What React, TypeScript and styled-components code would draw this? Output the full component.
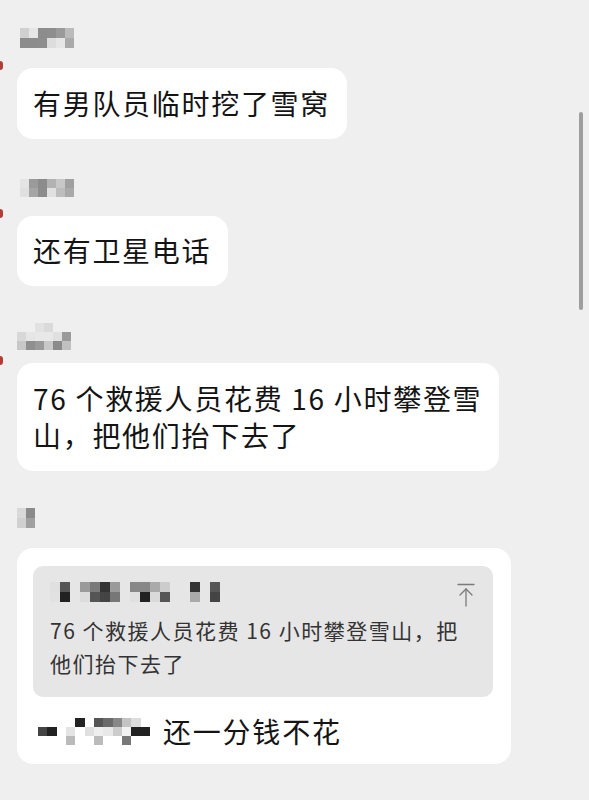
import styled, { createGlobalStyle } from "styled-components";

const GlobalStyle = createGlobalStyle`
  body {
    margin: 0;
    background: #efefef;
    font-family: "Noto Sans CJK SC", "Noto Sans", sans-serif;
    color: #141414;
  }
`;

const StyledFeed = styled.div`
  display: flex;
  flex-direction: column;
  gap: 37px;
  padding: 28px 0 40px 0;
`;

const StyledGroup = styled.div`
  display: flex;
  align-items: flex-start;
`;

const StyledMarker = styled.div<{ $on: boolean }>`
  flex-shrink: 0;
  width: 3px;
  height: 9px;
  margin: 33px 14px 0 0;
  border-radius: 0 5px 5px 0;
  background: ${(p) => (p.$on ? "#b43c36" : "transparent")};
`;

const StyledBody = styled.div`
  display: flex;
  flex-direction: column;
  align-items: flex-start;
`;

const StyledNameRow = styled.div<{ $offset: number }>`
  height: 40px;
  padding: ${(p) => p.$offset}px 0 0 3px;
  box-sizing: border-box;
`;

const StyledMosaic = styled.div<{ $cols: number; $w: number; $h: number }>`
  display: grid;
  grid-template-columns: repeat(${(p) => p.$cols}, ${(p) => p.$w}px);
  grid-auto-rows: ${(p) => p.$h}px;
  flex-shrink: 0;
`;

const StyledCell = styled.div<{ $c: string }>`
  background: ${(p) => p.$c || "transparent"};
`;

const StyledBubble = styled.div`
  background: #ffffff;
  border-radius: 16px;
  padding: 16.5px 17px 16.5px 16px;
  font-size: 28px;
  letter-spacing: 1.7px;
  line-height: 37.5px;
  white-space: nowrap;
`;

const StyledReplyBubble = styled.div`
  width: 494px;
  box-sizing: border-box;
  background: #ffffff;
  border-radius: 16px;
  padding: 18px 18px 14px 16px;
`;

const StyledQuote = styled.div`
  background: #e6e6e6;
  border-radius: 10px;
  padding: 16px 22px 17px 17px;
`;

const StyledQuoteHeader = styled.div`
  height: 20px;
  margin-bottom: 12px;
  display: flex;
  justify-content: space-between;
  align-items: flex-start;
`;

const StyledJumpIcon = styled.svg`
  width: 18px;
  height: 24px;
  margin: 1px -4px 0 0;
`;

const StyledQuoteText = styled.div`
  font-size: 21px;
  letter-spacing: 1.5px;
  line-height: 33px;
  color: #333333;
`;

const StyledReplyLine = styled.div`
  margin-top: 15px;
  padding-left: 5px;
  display: flex;
  align-items: center;
  gap: 13px;
  font-size: 28px;
  letter-spacing: 1.8px;
  line-height: 38px;
  white-space: nowrap;
`;

const StyledScrollbar = styled.div`
  position: fixed;
  top: 112px;
  right: 6px;
  width: 4px;
  height: 198px;
  border-radius: 2px;
  background: #9e9e9e;
`;

type MosaicProps = { rows: string[][]; w: number; h: number };

const Mosaic = ({ rows, w, h }: MosaicProps) => (
  <StyledMosaic $cols={rows[0].length} $w={w} $h={h}>
    {rows.flat().map((c, i) => (
      <StyledCell key={i} $c={c} />
    ))}
  </StyledMosaic>
);

const names: { rows: string[][]; w: number; h: number; offset: number }[] = [
  {
    w: 9,
    h: 10,
    offset: 0,
    rows: [
      ["#d0d0d0", "#e6e6e6", "#8c8c8c", "#8e8e8e", "#9a9a9a", "#bbbbbb"],
      ["#8c8c8c", "#8c8c8c", "#8e8e8e", "#dddddd", "#e6e6e6", "#aaaaaa"],
    ],
  },
  {
    w: 9,
    h: 9,
    offset: 3,
    rows: [
      ["#e4e4e4", "#9a9a9a", "#8c8c8c", "#b2b2b2", "#c8c8c8", "#a0a0a0"],
      ["#e0e0e0", "#a5a5a5", "#8c8c8c", "#e0e0e0", "#bdbdbd", "#a9a9a9"],
    ],
  },
  {
    w: 9,
    h: 9,
    offset: -3,
    rows: [
      ["", "", "#e2e2e2", "#dadada", "", ""],
      ["#d8d8d8", "#e6e6e6", "#e8e8e8", "#e8e8e8", "#e0e0e0", "#9a9a9a"],
      ["#c8c8c8", "#8f8f8f", "#9a9a9a", "#c8c8c8", "#8a8a8a", "#c0c0c0"],
    ],
  },
  {
    w: 9,
    h: 10,
    offset: -1,
    rows: [
      ["#d8d8d8", "#8a8a8a"],
      ["#d0d0d0", "#a0a0a0"],
    ],
  },
];

const quoteName = [
  ["#e0e0e0", "#555555", "", "#9a9a9a", "#7a7a7a", "#333333", "#9a9a9a", "", "#888888", "#888888", "#aaaaaa", "#cccccc", "", "", "#333333", "", "#555555"],
  ["#e2e2e2", "#222222", "", "#dcdcdc", "#555555", "#444444", "#777777", "", "#e0e0e0", "#222222", "#dadada", "#555555", "", "", "#aaaaaa", "", "#444444"],
];

const replyName = [
  ["", "", "", "", "#222222", "", "#555555", "#6a6a6a", "#888888", "#c4c4c4", "#dddddd", ""],
  ["#444444", "#222222", "", "#e4e4e4", "", "#e0e0e0", "#eeeeee", "#e8e8e8", "#cccccc", "#f2f2f2", "#222222", "#222222"],
  ["", "", "", "#bbbbbb", "", "", "#bbbbbb", "", "", "#777777", "", ""],
];

const App = () => {
  return (
    <>
      <GlobalStyle />
      <StyledFeed>
        <StyledGroup>
          <StyledMarker $on />
          <StyledBody>
            <StyledNameRow $offset={names[0].offset}>
              <Mosaic rows={names[0].rows} w={names[0].w} h={names[0].h} />
            </StyledNameRow>
            <StyledBubble>有男队员临时挖了雪窝</StyledBubble>
          </StyledBody>
        </StyledGroup>

        <StyledGroup>
          <StyledMarker $on />
          <StyledBody>
            <StyledNameRow $offset={names[1].offset}>
              <Mosaic rows={names[1].rows} w={names[1].w} h={names[1].h} />
            </StyledNameRow>
            <StyledBubble>还有卫星电话</StyledBubble>
          </StyledBody>
        </StyledGroup>

        <StyledGroup>
          <StyledMarker $on />
          <StyledBody>
            <StyledNameRow $offset={names[2].offset}>
              <Mosaic rows={names[2].rows} w={names[2].w} h={names[2].h} />
            </StyledNameRow>
            <StyledBubble>
              76 个救援人员花费 16 小时攀登雪
              <br />
              山，把他们抬下去了
            </StyledBubble>
          </StyledBody>
        </StyledGroup>

        <StyledGroup>
          <StyledMarker $on={false} />
          <StyledBody>
            <StyledNameRow $offset={names[3].offset}>
              <Mosaic rows={names[3].rows} w={names[3].w} h={names[3].h} />
            </StyledNameRow>
            <StyledReplyBubble>
              <StyledQuote>
                <StyledQuoteHeader>
                  <Mosaic rows={quoteName} w={10} h={10} />
                  <StyledJumpIcon viewBox="0 0 18 24" fill="none" stroke="#7a7a7a" strokeWidth="1.3" strokeLinecap="round">
                    <path d="M1 1.5h16" />
                    <path d="M9 6v17" />
                    <path d="M3 12l6-6 6 6" />
                  </StyledJumpIcon>
                </StyledQuoteHeader>
                <StyledQuoteText>76 个救援人员花费 16 小时攀登雪山，把他们抬下去了</StyledQuoteText>
              </StyledQuote>
              <StyledReplyLine>
                <Mosaic rows={replyName} w={9.33} h={9} />
                <span>还一分钱不花</span>
              </StyledReplyLine>
            </StyledReplyBubble>
          </StyledBody>
        </StyledGroup>
      </StyledFeed>
      <StyledScrollbar />
    </>
  );
};

export default App;
